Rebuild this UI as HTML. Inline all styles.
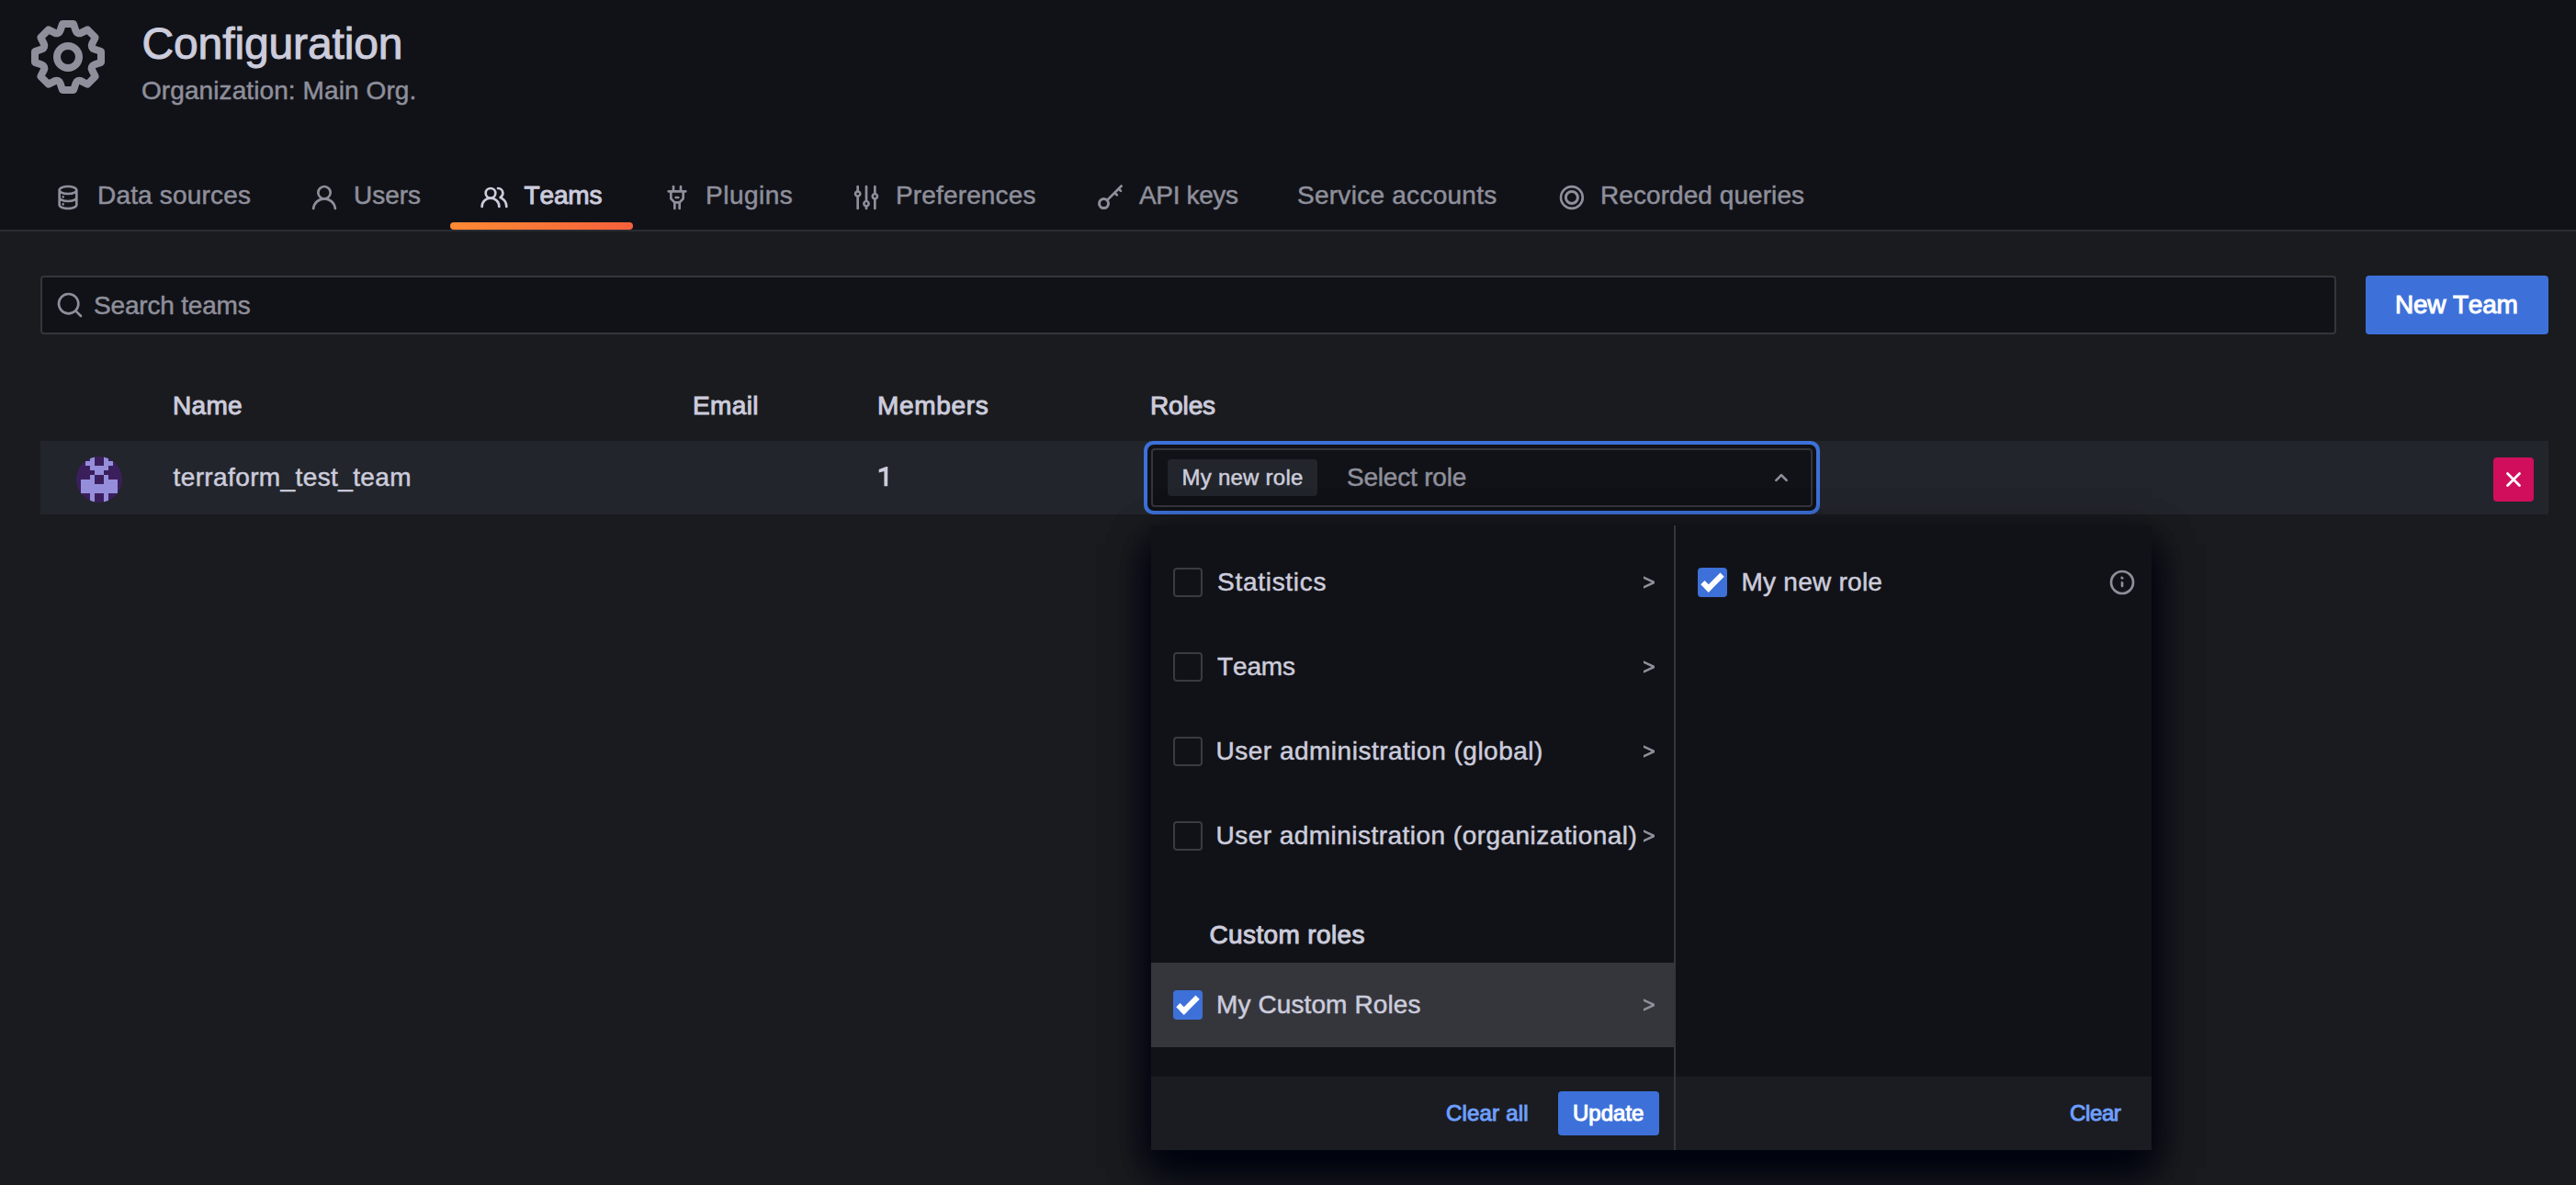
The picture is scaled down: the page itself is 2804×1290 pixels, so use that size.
<!DOCTYPE html>
<html><head><meta charset="utf-8">
<style>
*{box-sizing:border-box;margin:0;padding:0}
html,body{width:2804px;height:1290px;overflow:hidden}
body{background:#1a1b1f;font-family:"Liberation Sans",sans-serif;position:relative;font-kerning:none}
.a{position:absolute}
.t{position:absolute;white-space:nowrap;font-kerning:none;-webkit-text-stroke:0.5px currentColor}
svg.i{position:absolute;fill:#8e8f9b}
.t.b{-webkit-text-stroke:0}
.cb{position:absolute;width:32px;height:32px;border-radius:4px;border:2px solid #3a3b42;background:#111217}
.cb.on{background:#3d71d9;border:none}
.cb.on::after{content:"";position:absolute;left:10px;top:2px;width:12px;height:24px;border:solid #fff;border-width:0 6px 6px 0;transform:rotate(45deg);box-sizing:border-box}
</style></head><body>
<!-- header -->
<div class="a" style="left:0;top:0;width:2804px;height:250px;background:#111217"></div>
<div class="a" style="left:0;top:250px;width:2804px;height:2px;background:#2b2c31"></div>
<div class="a" style="left:490px;top:242px;width:199px;height:8px;border-radius:4px;background:linear-gradient(90deg,#ff8a33,#f5603c)"></div>

<!-- search -->
<div class="a" style="left:44px;top:300px;width:2499px;height:64px;background:#111217;border:2px solid #35363c;border-radius:4px"></div>
<div class="a" style="left:2575px;top:300px;width:199px;height:64px;background:#3d71d9;border-radius:4px"></div>

<!-- row -->
<div class="a" style="left:44px;top:480px;width:2730px;height:80px;background:#22252b"></div>
<div class="a" style="left:2714px;top:498px;width:44px;height:48px;background:#d10e5c;border-radius:4px"></div>

<!-- role picker -->
<div class="a" style="left:1245px;top:480px;width:736px;height:80px;background:#3d71d9;border-radius:10px"></div>
<div class="a" style="left:1249px;top:484px;width:728px;height:72px;background:#111217;border-radius:7px"></div>
<div class="a" style="left:1253px;top:488px;width:720px;height:64px;background:#111217;border:2px solid #35363c;border-radius:4px"></div>
<div class="a" style="left:1271px;top:500px;width:163px;height:40px;background:#22252b;border-radius:4px"></div>

<!-- dropdown -->
<div class="a" style="left:1253px;top:572px;width:1089px;height:680px;background:#111217;box-shadow:0 20px 40px rgb(0,4,15),0 20px 40px rgb(0,4,15)"></div>
<div class="a" style="left:1253px;top:1172px;width:1089px;height:80px;background:#1b1c21"></div>
<div class="a" style="left:1253px;top:1048px;width:569px;height:92px;background:#35363c"></div>
<div class="a" style="left:1822px;top:572px;width:2px;height:680px;background:#35363c"></div>
<div class="a" style="left:1696px;top:1188px;width:110px;height:48px;background:#3d71d9;border-radius:4px"></div>

<div class="cb" style="left:1277px;top:618px"></div>
<div class="cb" style="left:1277px;top:710px"></div>
<div class="cb" style="left:1277px;top:802px"></div>
<div class="cb" style="left:1277px;top:894px"></div>
<div class="cb on" style="left:1277px;top:1078px"></div>
<div class="cb on" style="left:1848px;top:618px"></div>


<svg class="a" style="left:950px;top:500px;width:24px;height:34px" viewBox="950 500 24 34"><path d="M956.7,511.0 L964.6,507.9 L966.3,507.9 L966.2,529.2 L962.4,529.2 L962.4,512.9 L956.7,514.6Z" fill="#ccccdc"/></svg>
<!-- gear -->
<svg class="i" style="left:26px;top:14px;width:96px;height:96px" viewBox="0 0 24 24"><path d="M21.32,9.55l-1.89-.63.89-1.78A1,1,0,0,0,20.130,6L18,3.87a1,1,0,0,0-1.15-.19l-1.78.89-.63-1.89A1,1,0,0,0,13.5,2h-3a1,1,0,0,0-.95.68L8.92,4.57,7.14,3.68A1,1,0,0,0,6,3.87L3.87,6a1,1,0,0,0-.19,1.15l.89,1.78-1.89.63A1,1,0,0,0,2,10.5v3a1,1,0,0,0,.68.95l1.890.63-.89,1.78A1,1,0,0,0,3.870,18L6,20.13a1,1,0,0,0,1.15.19l1.78-.89.63,1.89a1,1,0,0,0,.95.68h3a1,1,0,0,0,.95-.68l.63-1.89,1.78.89A1,1,0,0,0,18,20.13L20.13,18a1,1,0,0,0,.19-1.15l-.89-1.78,1.89-.63A1,1,0,0,0,22,13.5v-3A1,1,0,0,0,21.32,9.55ZM20,12.78l-1.2.4A2,2,0,0,0,17.64,16l.57,1.14-1.1,1.1L16,17.64a2,2,0,0,0-2.79,1.16l-.4,1.2H11.22l-.4-1.2A2,2,0,0,0,8,17.64l-1.14.57-1.1-1.1L6.36,16A2,2,0,0,0,5.2,13.18L4,12.78V11.22l1.2-.4A2,2,0,0,0,6.36,8L5.79,6.89l1.1-1.1L8,6.36A2,2,0,0,0,10.82,5.2l.4-1.2h1.56l.4,1.2A2,2,0,0,0,16,6.36l1.14-.57,1.1,1.1L17.64,8a2,2,0,0,0,1.16,2.79l1.2.4ZM12,8a4,4,0,1,0,4,4A4,4,0,0,0,12,8Zm0,6a2,2,0,1,1,2-2A2,2,0,0,1,12,14Z"/></svg>
<!-- database -->
<svg class="i" style="left:57.95px;top:198.75px;width:32px;height:32px" viewBox="0 0 24 24"><path d="M8,16.5a1,1,0,1,0,1,1A1,1,0,0,0,8,16.5ZM12,2C8,2,4,3.37,4,6V18c0,2.63,4,4,8,4s8-1.37,8-4V6C20,3.37,16,2,12,2Zm6,16c0,.71-2.28,2-6,2s-6-1.29-6-2V14.73A13.16,13.16,0,0,0,12,16a13.16,13.160,0,0,0,6-1.27Zm0-6c0,.71-2.28,2-6,2s-6-1.29-6-2V8.73A13.16,13.16,0,0,0,12,10a13.16,13.16,0,0,0,6-1.27ZM12,8C8.28,8,6,6.71,6,6s2.28-2,6-2,6,1.29,6,2S15.72,8,12,8ZM8,10.5a1,1,0,1,0,1,1A1,1,0,0,0,8,10.5Z"/></svg>
<!-- user -->
<svg class="i" style="left:337.1px;top:198.9px;width:32px;height:32px" viewBox="0 0 24 24"><path d="M15.71,12.71a6,6,0,1,0-7.42,0,10,10,0,0,0-6.22,8.18,1,1,0,0,0,2,.22,8,8,0,0,1,15.9,0,1,1,0,0,0,1,.89h.11a1,1,0,0,0,.88-1.1A10,10,0,0,0,15.71,12.71ZM12,12a4,4,0,1,1,4-4A4,4,0,0,1,12,12Z"/></svg>
<!-- users-alt -->
<svg class="i" style="left:521.75px;top:198.8px;width:32px;height:32px;fill:#ccccdc" viewBox="0 0 24 24"><path d="M12.3,12.22A4.92,4.92,0,0,0,14,8.5a5,5,0,0,0-10,0,4.92,4.92,0,0,0,1.7,3.72A8,8,0,0,0,1,19.5a1,1,0,0,0,2,0,6,6,0,0,1,12,0,1,1,0,0,0,2,0A8,8,0,0,0,12.3,12.22ZM9,11.5a3,3,0,1,1,3-3A3,3,0,0,1,9,11.5Zm9.74.32A5,5,0,0,0,15,3.5a1,1,0,0,0,0,2,3,3,0,0,1,3,3,3,3,0,0,1-1.5,2.59,1,1,0,0,0-.5.84,1,1,0,0,0,.45.86l.39.26.13.07a7,7,0,0,1,4,6.38,1,1,0,0,0,2,0A9,9,0,0,0,18.74,11.82Z"/></svg>
<!-- plug -->
<svg class="i" style="left:720.9px;top:199px;width:32px;height:32px" viewBox="0 0 24 24"><path d="M19,6H16V3a1,1,0,0,0-2,0V6H10V3A1,1,0,0,0,8,3V6H5A1,1,0,0,0,5,8H6v5a1,1,0,0,0,.29.71L9,16.41V21a1,1,0,0,0,2,0V17h2v4a1,1,0,0,0,2,0V16.41l2.71-2.7A1,1,0,0,0,18,13V8h1a1,1,0,0,0,0-2Zm-3,6.59L13.59,15H10.41L8,12.59V8h8ZM11,13h2a1,1,0,0,0,0-2H11a1,1,0,0,0,0,2Z"/></svg>
<!-- sliders -->
<svg class="i" style="left:927.15px;top:199px;width:32px;height:32px" viewBox="0 0 24 24"><path d="M20,8.18V3a1,1,0,0,0-2,0V8.18a3,3,0,0,0,0,5.640V21a1,1,0,0,0,2,0V13.82a3,3,0,0,0,0-5.64ZM19,12a1,1,0,1,1,1-1A1,1,0,0,1,19,12Zm-6,2.18V3a1,1,0,0,0-2,0V14.18a3,3,0,0,0,0,5.64V21a1,1,0,0,0,2,0V19.82a3,3,0,0,0,0-5.64ZM12,18a1,1,0,1,1,1-1A1,1,0,0,1,12,18ZM6,6.18V3A1,1,0,0,0,4,3V6.18a3,3,0,0,0,0,5.64V21a1,1,0,0,0,2,0V11.82A3,3,0,0,0,6,6.18ZM5,10A1,1,0,1,1,6,9,1,1,0,0,1,5,10Z"/></svg>
<!-- key -->
<svg class="a" style="left:1190px;top:197px;width:36px;height:36px" viewBox="0 0 36 36" fill="none" stroke="#8e8f9b" stroke-width="3" stroke-linecap="round"><circle cx="11.5" cy="24.6" r="5"/><path d="M15,21.1 L30.6,5.5 M27.6,8.5 L30,10.9 M23.3,12.8 L25.8,15.3" stroke-width="2.7"/></svg>
<!-- record -->
<svg class="a" style="left:1695px;top:199px;width:32px;height:32px" viewBox="0 0 32 32" fill="none" stroke="#8e8f9b" stroke-width="2.85"><circle cx="15.9" cy="16" r="11.9" stroke-width="2.6"/><circle cx="15.9" cy="16" r="6.5" stroke-width="3"/></svg>
<!-- search -->
<svg class="i" style="left:60px;top:315.75px;width:32px;height:32px" viewBox="0 0 24 24"><path d="M21.71,20.29,18,16.61A9,9,0,1,0,16.61,18l3.68,3.68a1,1,0,0,0,1.42,0A1,1,0,0,0,21.71,20.29ZM11,18a7,7,0,1,1,7-7A7,7,0,0,1,11,18Z"/></svg>
<!-- angle up -->
<svg class="i" style="left:1923px;top:504px;width:32px;height:32px" viewBox="0 0 24 24"><path d="M17,13.41,12.71,9.17a1,1,0,0,0-1.42,0L7.050,13.41a1,1,0,0,0,0,1.420,1,1,0,0,0,1.41,0L12,11.29l3.54,3.54a1,1,0,0,0,.7.29,1,1,0,0,0,.71-.29A1,1,0,0,0,17,13.41Z"/></svg>
<!-- times -->
<svg class="a" style="left:2722px;top:508px;width:28px;height:28px" viewBox="0 0 28 28" stroke="#fff" stroke-width="2.8" stroke-linecap="round"><path d="M7.5,7.5L20.5,20.5M20.5,7.5L7.5,20.5"/></svg>
<!-- info -->
<svg class="i" style="left:2294px;top:618px;width:32px;height:32px" viewBox="0 0 24 24"><path d="M12,2A10,10,0,1,0,22,12,10,10,0,0,0,12,2Zm0,18a8,8,0,1,1,8-8A8,8,0,0,1,12,20Zm0-9a1,1,0,0,0-1,1v3a1,1,0,0,0,2,0v-3A1,1,0,0,0,12,11.5Zm0-4a1.25,1.25,0,1,0,1.25,1.25A1.25,1.25,0,0,0,12,7.5Z"/></svg>
<!-- chevrons > -->
<svg class="a" style="left:1786px;top:625px;width:18px;height:18px" viewBox="0 0 18 18"><path d="M3.0,2.3 L15.0,7.7 L15.0,10.3 L3.0,15.7 L3.0,12.9 L11.6,9 L3.0,5.1Z" fill="#8e8f9b"/></svg>
<svg class="a" style="left:1786px;top:717px;width:18px;height:18px" viewBox="0 0 18 18"><path d="M3.0,2.3 L15.0,7.7 L15.0,10.3 L3.0,15.7 L3.0,12.9 L11.6,9 L3.0,5.1Z" fill="#8e8f9b"/></svg>
<svg class="a" style="left:1786px;top:809px;width:18px;height:18px" viewBox="0 0 18 18"><path d="M3.0,2.3 L15.0,7.7 L15.0,10.3 L3.0,15.7 L3.0,12.9 L11.6,9 L3.0,5.1Z" fill="#8e8f9b"/></svg>
<svg class="a" style="left:1786px;top:901px;width:18px;height:18px" viewBox="0 0 18 18"><path d="M3.0,2.3 L15.0,7.7 L15.0,10.3 L3.0,15.7 L3.0,12.9 L11.6,9 L3.0,5.1Z" fill="#8e8f9b"/></svg>
<svg class="a" style="left:1786px;top:1085px;width:18px;height:18px" viewBox="0 0 18 18"><path d="M3.0,2.3 L15.0,7.7 L15.0,10.3 L3.0,15.7 L3.0,12.9 L11.6,9 L3.0,5.1Z" fill="#8e8f9b"/></svg>

<svg class="a" style="left:83px;top:497px;width:50px;height:50px" viewBox="0 0 10 10" shape-rendering="crispEdges"><defs><clipPath id="cc"><circle cx="5" cy="5" r="5"/></clipPath></defs><g clip-path="url(#cc)"><rect width="10" height="10" fill="#3b1f5c"/><g fill="#958fdb"><rect x="3" y="0" width="1" height="1"/><rect x="6" y="0" width="1" height="1"/><rect x="2" y="1" width="1" height="1"/><rect x="3" y="1" width="1" height="1"/><rect x="6" y="1" width="1" height="1"/><rect x="7" y="1" width="1" height="1"/><rect x="3" y="2" width="1" height="1"/><rect x="4" y="2" width="1" height="1"/><rect x="5" y="2" width="1" height="1"/><rect x="6" y="2" width="1" height="1"/><rect x="4" y="3" width="1" height="1"/><rect x="5" y="3" width="1" height="1"/><rect x="3" y="4" width="1" height="1"/><rect x="6" y="4" width="1" height="1"/><rect x="1" y="5" width="1" height="1"/><rect x="2" y="5" width="1" height="1"/><rect x="3" y="5" width="1" height="1"/><rect x="6" y="5" width="1" height="1"/><rect x="7" y="5" width="1" height="1"/><rect x="8" y="5" width="1" height="1"/><rect x="1" y="6" width="1" height="1"/><rect x="2" y="6" width="1" height="1"/><rect x="3" y="6" width="1" height="1"/><rect x="4" y="6" width="1" height="1"/><rect x="5" y="6" width="1" height="1"/><rect x="6" y="6" width="1" height="1"/><rect x="7" y="6" width="1" height="1"/><rect x="8" y="6" width="1" height="1"/><rect x="1" y="7" width="1" height="1"/><rect x="2" y="7" width="1" height="1"/><rect x="3" y="7" width="1" height="1"/><rect x="4" y="7" width="1" height="1"/><rect x="5" y="7" width="1" height="1"/><rect x="6" y="7" width="1" height="1"/><rect x="7" y="7" width="1" height="1"/><rect x="8" y="7" width="1" height="1"/><rect x="3" y="8" width="1" height="1"/><rect x="6" y="8" width="1" height="1"/><rect x="3" y="9" width="1" height="1"/><rect x="6" y="9" width="1" height="1"/></g></g></svg>
<div class="t" style="left:154.50px;top:12.30px;font-size:48px;line-height:72px;letter-spacing:-0.125px;-webkit-text-stroke:1px currentColor;color:#ccccdc">Configuration</div>
<div class="t" style="left:154.00px;top:78.20px;font-size:28px;line-height:42px;letter-spacing:0.091px;color:#8e8f9b">Organization: Main Org.</div>
<div class="t" style="left:106.00px;top:192.20px;font-size:28px;line-height:42px;letter-spacing:0.182px;color:#8e8f9b">Data sources</div>
<div class="t" style="left:385.00px;top:192.20px;font-size:28px;line-height:42px;letter-spacing:-0.000px;color:#8e8f9b">Users</div>
<div class="t" style="left:570.50px;top:192.20px;font-size:28px;line-height:42px;letter-spacing:-0.125px;-webkit-text-stroke:1px currentColor;color:#ccccdc">Teams</div>
<div class="t" style="left:768.00px;top:192.20px;font-size:28px;line-height:42px;letter-spacing:0.500px;color:#8e8f9b">Plugins</div>
<div class="t" style="left:975.00px;top:192.20px;font-size:28px;line-height:42px;letter-spacing:0.150px;color:#8e8f9b">Preferences</div>
<div class="t" style="left:1240.00px;top:192.20px;font-size:28px;line-height:42px;letter-spacing:-0.357px;color:#8e8f9b">API keys</div>
<div class="t" style="left:1412.00px;top:192.20px;font-size:28px;line-height:42px;letter-spacing:0.267px;color:#8e8f9b">Service accounts</div>
<div class="t" style="left:1742.00px;top:192.20px;font-size:28px;line-height:42px;letter-spacing:0.067px;color:#8e8f9b">Recorded queries</div>
<div class="t" style="left:102.00px;top:312.10px;font-size:28px;line-height:42px;letter-spacing:-0.182px;color:#8e8f9b">Search teams</div>
<div class="t" style="left:2607.00px;top:311.20px;font-size:28px;line-height:42px;letter-spacing:-0.214px;-webkit-text-stroke:1px currentColor;color:#ffffff">New Team</div>
<div class="t" style="left:188.00px;top:421.40px;font-size:28px;line-height:42px;letter-spacing:0.333px;-webkit-text-stroke:1px currentColor;color:#ccccdc">Name</div>
<div class="t" style="left:754.00px;top:421.20px;font-size:28px;line-height:42px;letter-spacing:0.375px;-webkit-text-stroke:1px currentColor;color:#ccccdc">Email</div>
<div class="t" style="left:955.00px;top:421.20px;font-size:28px;line-height:42px;letter-spacing:0.667px;-webkit-text-stroke:1px currentColor;color:#ccccdc">Members</div>
<div class="t" style="left:1252.00px;top:421.20px;font-size:28px;line-height:42px;letter-spacing:-0.125px;-webkit-text-stroke:1px currentColor;color:#ccccdc">Roles</div>
<div class="t" style="left:188.50px;top:499.30px;font-size:28px;line-height:42px;letter-spacing:0.389px;color:#ccccdc">terraform_test_team</div>
<div class="t" style="left:1286.50px;top:502.20px;font-size:24px;line-height:36px;letter-spacing:0.250px;color:#ccccdc">My new role</div>
<div class="t" style="left:1466.00px;top:499.00px;font-size:28px;line-height:42px;letter-spacing:-0.200px;color:#8e8f9b">Select role</div>
<div class="t" style="left:1325.00px;top:613.30px;font-size:28px;line-height:42px;letter-spacing:0.722px;color:#ccccdc">Statistics</div>
<div class="t" style="left:1325.00px;top:705.20px;font-size:28px;line-height:42px;letter-spacing:-0.125px;color:#ccccdc">Teams</div>
<div class="t" style="left:1323.50px;top:797.10px;font-size:28px;line-height:42px;letter-spacing:0.500px;color:#ccccdc">User administration (global)</div>
<div class="t" style="left:1323.50px;top:889.20px;font-size:28px;line-height:42px;letter-spacing:0.469px;color:#ccccdc">User administration (organizational)</div>
<div class="t" style="left:1316.50px;top:997.20px;font-size:28px;line-height:42px;letter-spacing:0.364px;-webkit-text-stroke:1px currentColor;color:#ccccdc">Custom roles</div>
<div class="t" style="left:1324.00px;top:1072.80px;font-size:28px;line-height:42px;letter-spacing:0.107px;color:#ccccdc">My Custom Roles</div>
<div class="t" style="left:1895.50px;top:613.10px;font-size:28px;line-height:42px;letter-spacing:0.250px;color:#ccccdc">My new role</div>
<div class="t" style="left:1574.00px;top:1194.00px;font-size:24px;line-height:36px;letter-spacing:0.188px;-webkit-text-stroke:1px currentColor;color:#6e9fff">Clear all</div>
<div class="t" style="left:1712.00px;top:1194.00px;font-size:24px;line-height:36px;letter-spacing:0.000px;-webkit-text-stroke:1px currentColor;color:#ffffff">Update</div>
<div class="t" style="left:2253.00px;top:1194.00px;font-size:24px;line-height:36px;letter-spacing:-0.375px;-webkit-text-stroke:1px currentColor;color:#6e9fff">Clear</div>
</body></html>
